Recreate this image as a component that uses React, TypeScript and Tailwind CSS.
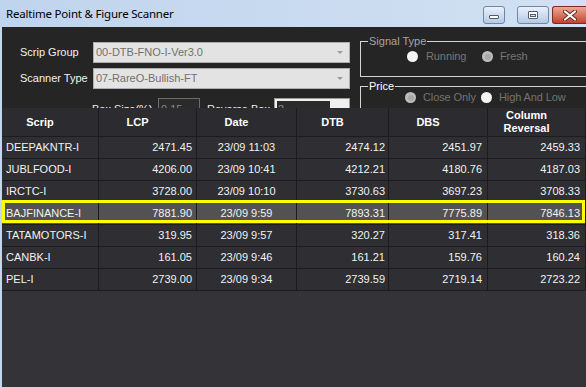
const rows = [
  ["DEEPAKNTR-I", "2471.45", "23/09 11:03", "2474.12", "2451.97", "2459.33"],
  ["JUBLFOOD-I", "4206.00", "23/09 10:41", "4212.21", "4180.76", "4187.03"],
  ["IRCTC-I", "3728.00", "23/09 10:10", "3730.63", "3697.23", "3708.33"],
  ["BAJFINANCE-I", "7881.90", "23/09 9:59", "7893.31", "7775.89", "7846.13"],
  ["TATAMOTORS-I", "319.95", "23/09 9:57", "320.27", "317.41", "318.36"],
  ["CANBK-I", "161.05", "23/09 9:46", "161.21", "159.76", "160.24"],
  ["PEL-I", "2739.00", "23/09 9:34", "2739.59", "2719.14", "2723.22"],
];

const widths = ["w-[97px]", "w-[98px]", "w-[100px]", "w-[92px]", "w-[99px]", "w-[98px]"];
const align = ["text-left pl-[4px]", "text-right pr-[4px]", "text-center", "text-right pr-[3px]", "text-right pr-[5px]", "text-right pr-[5px]"];
const SELECTED = 3;

const Radio = ({ on }: { on: boolean }) =>
  on ? (
    <span className="w-[11px] h-[11px] rounded-full bg-[#f4f4f4] shrink-0" />
  ) : (
    <span className="w-[11px] h-[11px] rounded-full bg-[#bdbdbd] shrink-0 flex items-center justify-center">
      <span className="w-[6px] h-[6px] rounded-full bg-[#a9a9a9]" />
    </span>
  );

const Combo = ({ value }: { value: string }) => (
  <div className="w-[257px] h-[21px] bg-[#e3e3e3] border border-[#adadad] flex items-center pl-[2px] pr-[6px] text-[#707070]">
    <span className="flex-1">{value}</span>
    <span className="w-0 h-0 border-l-[3px] border-r-[3px] border-t-[3px] border-l-transparent border-r-transparent border-t-[#9c9c9c]" />
  </div>
);

export default function App() {
  return (
    <div
      className="w-[586px] h-[387px] overflow-hidden flex flex-col bg-[#c3d6ee] text-[11px]"
      style={{ fontFamily: '"Liberation Sans", Arial, sans-serif' }}
    >
      {/* title bar */}
      <div className="h-[27px] shrink-0 flex items-start bg-gradient-to-r from-[#bfd4ed] to-[#d2e1f3]">
        <span
          className="pl-[6px] pt-[6px] text-[11.5px] text-black leading-[16px] tracking-[-0.2px]"
          style={{ fontFamily: '"Segoe UI", "Noto Sans", sans-serif' }}
        >
          Realtime Point &amp; Figure Scanner
        </span>
        <div className="ml-auto mt-[6px] flex shrink-0">
          <div className="w-[22px] h-[18px] rounded-[3px] border border-[#6f86a6] bg-gradient-to-b from-[#eaf1fa] to-[#b4c9e3] flex items-center justify-center">
            <span className="mt-[4px] w-[10px] h-[4px] bg-white border border-[#4e5d72] rounded-[1px]" />
          </div>
          <div className="ml-[12px] w-[32px] h-[18px] rounded-[3px] border border-[#6f86a6] bg-gradient-to-b from-[#eaf1fa] to-[#b4c9e3] flex items-center justify-center">
            <span className="w-[10px] h-[8px] bg-white border border-[#4e5d72] rounded-[1px] flex items-center justify-center">
              <span className="w-[6px] h-[3px] border border-[#4e5d72] bg-[#dbe5f2]" />
            </span>
          </div>
          <div className="ml-[3px] w-[34px] h-[18px] rounded-l-[3px] border border-r-0 border-[#7b2c1f] bg-gradient-to-b from-[#eba897] to-[#c2412a] flex items-center justify-center">
            <svg width="14" height="11" viewBox="0 0 14 11">
              <path d="M2 1.5 L12 9.5 M12 1.5 L2 9.5" stroke="#5b2a22" strokeWidth="4" strokeLinecap="round" />
              <path d="M2 1.5 L12 9.5 M12 1.5 L2 9.5" stroke="#ffffff" strokeWidth="2.2" strokeLinecap="round" />
            </svg>
          </div>
        </div>
      </div>

      {/* body */}
      <div className="flex-1 ml-[2px] flex flex-col bg-[#333338]">
        {/* form */}
        <div className="h-[81px] shrink-0 overflow-hidden bg-[#252525] flex text-[#f2f2f2]">
          <div className="w-[348px] shrink-0 pt-[15px] flex flex-col">
            <div className="flex items-center h-[21px] shrink-0">
              <span className="w-[73px] pl-[18px] shrink-0 box-content">Scrip Group</span>
              <Combo value="00-DTB-FNO-I-Ver3.0" />
            </div>
            <div className="flex items-center h-[21px] mt-[5px] shrink-0">
              <span className="w-[73px] pl-[18px] shrink-0 box-content">Scanner Type</span>
              <Combo value="07-RareO-Bullish-FT" />
            </div>
            <div className="flex items-start h-[21px] mt-[9px] pl-[90px] shrink-0">
              <span className="w-[66px] pt-[3px]">Box Size(%)</span>
              <div className="w-[42px] h-[20px] border border-[#6c6c6c] bg-[#2b2b2b] text-[#8a8a8a] pl-[2px] pt-[2px]">0.15</div>
              <span className="ml-[7px] w-[67px] pt-[3px]">Reverse Box</span>
              <div className="w-[76px] h-[20px] border border-[#9a9a9a] bg-[#f0f0f0] p-[2px]">
                <div className="w-[53px] h-full bg-[#2b2b2b] text-[#8a8a8a] pl-[1px]">3</div>
              </div>
            </div>
          </div>

          <div className="ml-[10px] flex-1 flex flex-col">
            <div className="relative shrink-0 mt-[14px] h-[36px] w-[260px] border border-[#d4d4d4]">
              <span className="absolute -top-[8px] left-[7px] bg-[#252525] px-px leading-[14px] text-[#a5a5a5]">
                Signal Type
              </span>
              <div className="flex items-center pl-[46px] pt-[9px] text-[#777777] tracking-[-0.1px] leading-[11px]">
                <div className="w-[75px] flex items-center gap-[8px]">
                  <Radio on />
                  <span>Running</span>
                </div>
                <div className="flex items-center gap-[7px]">
                  <Radio on={false} />
                  <span>Fresh</span>
                </div>
              </div>
            </div>
            <div className="relative shrink-0 mt-[9px] h-[40px] w-[260px] border border-[#d4d4d4]">
              <span className="absolute -top-[8px] left-[7px] bg-[#252525] px-px leading-[14px] text-white">
                Price
              </span>
              <div className="flex items-center pl-[44px] pt-[5px] text-[#737373] tracking-[-0.1px] leading-[11px]">
                <div className="w-[76px] flex items-center gap-[7px]">
                  <Radio on={false} />
                  <span>Close Only</span>
                </div>
                <div className="flex items-center gap-[7px]">
                  <Radio on />
                  <span>High And Low</span>
                </div>
              </div>
            </div>
          </div>
        </div>

        {/* grid */}
        <div className="flex flex-col text-[#f2f2f2]">
          <div className="flex h-[29px] bg-[#2b2b30] border-b border-[#1c1c1f] font-bold text-white">
            {["Scrip", "LCP", "Date", "DTB", "DBS", "Column Reversal"].map((h, i) => (
              <div
                key={h}
                className={`${widths[i]} shrink-0 border-r border-[#1c1c1f] flex items-center justify-center pr-[20px] text-center leading-[13px]`}
              >
                {h === "Column Reversal" ? (
                  <span>
                    Column
                    <br />
                    Reversal
                  </span>
                ) : (
                  h
                )}
              </div>
            ))}
          </div>
          {rows.map((r, ri) => (
            <div
              key={r[0]}
              className={`relative flex h-[22px] border-b border-[#1c1c1f] ${ri === SELECTED ? "bg-[#525252]" : "bg-[#2e2e33]"}`}
            >
              {r.map((c, ci) => (
                <div
                  key={ci}
                  className={`${widths[ci]} ${align[ci]} shrink-0 border-r border-[#1c1c1f] leading-[21px]`}
                >
                  {c}
                </div>
              ))}
              {ri === SELECTED && (
                <div className="absolute -top-[3px] left-0 right-[1px] bottom-[1px] border-[3px] border-[#ffff00]" />
              )}
            </div>
          ))}
        </div>
      </div>
    </div>
  );
}
